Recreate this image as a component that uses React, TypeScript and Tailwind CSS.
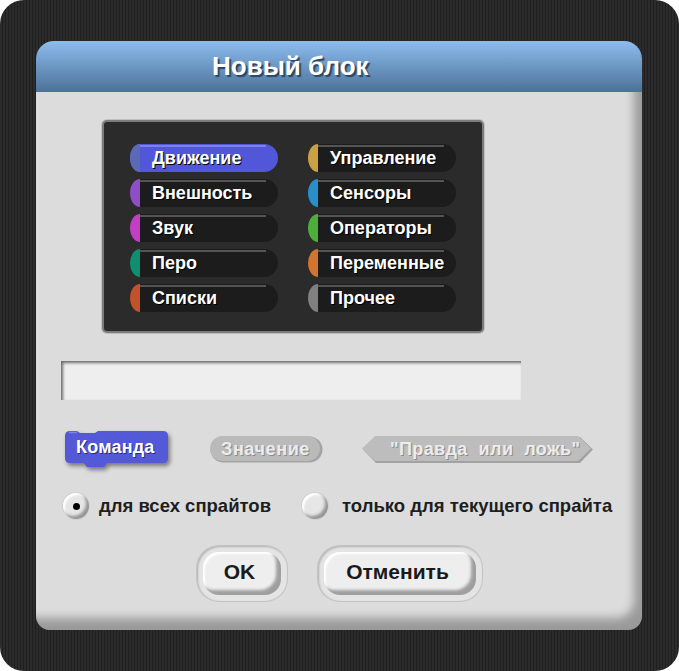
import React from 'react'

const font = "font-['Liberation_Sans',Arial,sans-serif]"

const left = [
  { label: 'Движение', cap: '#5c6ab6', active: true },
  { label: 'Внешность', cap: '#8e4fc6' },
  { label: 'Звук', cap: '#c23fc4' },
  { label: 'Перо', cap: '#0e8f6e' },
  { label: 'Списки', cap: '#c0532c' },
]

const right = [
  { label: 'Управление', cap: '#c9a043' },
  { label: 'Сенсоры', cap: '#2a8fc9' },
  { label: 'Операторы', cap: '#4fae3b' },
  { label: 'Переменные', cap: '#d0742f' },
  { label: 'Прочее', cap: '#808080' },
]

function CategoryButton({ label, cap, active }: { label: string; cap: string; active?: boolean }) {
  return (
    <div
      className={`relative h-[28px] w-[148px] overflow-hidden [border-radius:10px_14px_14px_10px/14px_14px_14px_14px] ${
        active ? 'bg-[#5157d8]' : 'bg-[#1c1c1c]'
      }`}
    >
      <div className="absolute left-0 top-0 h-full w-[10px]" style={{ background: cap }} />
      <div
        className={`absolute left-[10px] right-[12px] top-[1px] h-[2px] ${active ? 'bg-[#7b80e4]' : 'bg-[#545454]'}`}
      />
      <span className="absolute left-[22px] top-[4px] text-[18px] font-bold leading-[20px] text-white [text-shadow:1px_1px_0_#000]">
        {label}
      </span>
    </div>
  )
}

function Radio({ checked }: { checked?: boolean }) {
  return (
    <div className="flex h-[26px] w-[26px] items-center justify-center rounded-full bg-[#e6e6e6] shadow-[inset_-3px_-3px_3px_rgba(0,0,0,0.35),inset_2px_2px_2px_#fff,0_0_0_1px_#d0d0d0]">
      {checked && <div className="h-[7px] w-[7px] rounded-full bg-black" />}
    </div>
  )
}

function DialogButton({ label, w }: { label: string; w: string }) {
  return (
    <div className={`rounded-[22px] bg-[#e4e4e4] p-[6px] shadow-[0_0_0_1px_#c4c4c4,inset_1px_1px_2px_#b0b0b0] ${w}`}>
      <div className="flex h-[43px] items-center justify-center rounded-[16px] bg-[#eeeeee] shadow-[inset_-5px_-5px_3px_rgba(0,0,0,0.33),inset_2px_2px_2px_#fff]">
        <span className="-ml-[4px] -mt-[4px] text-[21px] font-bold text-[#1a1a1a]">{label}</span>
      </div>
    </div>
  )
}

export default function App() {
  return (
    <div className={`h-[671px] w-[679px] bg-white ${font}`}>
      <div className="h-full w-full rounded-[24px] bg-[repeating-linear-gradient(90deg,#2b2b2b_0px,#2b2b2b_2px,#1f1f1f_2px,#1f1f1f_3px)] pl-[36px] pt-[41px]">
        <div className="flex h-[589px] w-[606px] flex-col">
          {/* title bar */}
          <div className="flex h-[51px] items-center rounded-t-[18px] bg-[linear-gradient(#8dbdee,#4b7199)] pl-[176px]">
            <span className="text-[26px] font-bold text-white [text-shadow:2px_2px_1px_#2c4560]">
              Новый блок
            </span>
          </div>

          {/* body */}
          <div className="flex flex-1 flex-col rounded-b-[14px] bg-[#dcdcdc] shadow-[inset_-12px_-16px_10px_-4px_rgba(0,0,0,0.3)]">
            {/* categories */}
            <div className="ml-[66px] mt-[28px] h-[213px] w-[382px] rounded-[5px] border-2 border-[#7c7c7c] bg-[#2b2b2b] pl-[26px] pt-[22px] shadow-[0_0_0_1px_#c0c0c0]">
              <div className="grid grid-cols-[148px_148px] gap-x-[30px] gap-y-[7px]">
                {left.map((c, i) => (
                  <React.Fragment key={c.label}>
                    <CategoryButton {...c} />
                    <CategoryButton {...right[i]} />
                  </React.Fragment>
                ))}
              </div>
            </div>

            {/* name input */}
            <div className="ml-[25px] mt-[28px] h-[39px] w-[460px] bg-[#eeeeee] shadow-[inset_2px_2px_3px_rgba(0,0,0,0.55)]" />

            {/* block types */}
            <div className="mt-[31px] flex h-[40px] items-start">
              <div className="relative ml-[29px] h-[40px] w-[106px]">
                <svg width="106" height="40" className="absolute left-0 top-0 drop-shadow-[2px_3px_2px_rgba(0,0,0,0.45)]">
                  <path
                    d="M5 0 H12 L15 2 H30 L33 0 H98 Q103 0 103 5 V27 Q103 32 98 32 H42 L39 36 H22 L19 32 H5 Q0 32 0 27 V5 Q0 0 5 0 Z"
                    fill="#5459d8"
                  />
                  <path d="M4 1.5 H12" stroke="#7f83e6" strokeWidth="1.5" />
                </svg>
                <span className="absolute left-[11px] top-[6px] text-[18px] font-bold leading-[20px] tracking-[0.2px] text-white [text-shadow:1px_1px_0_#2a2d80]">
                  Команда
                </span>
              </div>

              <div className="relative ml-[39px] mt-[5px] h-[28px] w-[114px]">
                <svg width="114" height="28" className="absolute left-0 top-0">
                  <rect x="0.5" y="0.5" width="112" height="26" rx="13" fill="#a4a4a4" />
                  <rect x="0" y="0" width="110" height="25" rx="12.5" fill="#bababa" />
                </svg>
                <span className="absolute left-[11px] top-[3px] text-[18px] font-bold leading-[20px] tracking-[0.6px] text-[#ececec] [text-shadow:1px_1px_0_#8c8c8c]">
                  Значение
                </span>
              </div>

              <div className="relative ml-[38px] mt-[5px] h-[28px] w-[232px]">
                <svg width="232" height="28" className="absolute left-0 top-0">
                  <path d="M1 13.5 L14 1 H218 L231 13.5 L218 27 H14 Z" fill="#a2a2a2" />
                  <path d="M0 12.5 L13 0 H216 L229 12.5 L216 25 H13 Z" fill="#bdbdbd" />
                </svg>
                <span className="absolute left-[28px] top-[3px] whitespace-pre text-[18px] font-bold leading-[20px] tracking-[0.4px] text-[#ececec] [text-shadow:1px_1px_0_#8c8c8c]">
                  "Правда  или  ложь"
                </span>
              </div>
            </div>

            {/* scope radios */}
            <div className="ml-[27px] mt-[22px] flex h-[26px] items-center">
              <Radio checked />
              <span className="ml-[10px] text-[18.5px] font-bold text-[#1e1e1e]">для всех спрайтов</span>
              <div className="ml-[31px]">
                <Radio />
              </div>
              <span className="ml-[14px] text-[18.5px] font-bold text-[#1e1e1e]">только для текущего спрайта</span>
            </div>

            {/* buttons */}
            <div className="mt-[27px] flex justify-center gap-[31px]">
              <DialogButton label="OK" w="w-[90px]" />
              <DialogButton label="Отменить" w="w-[164px]" />
            </div>
          </div>
        </div>
      </div>
    </div>
  )
}
